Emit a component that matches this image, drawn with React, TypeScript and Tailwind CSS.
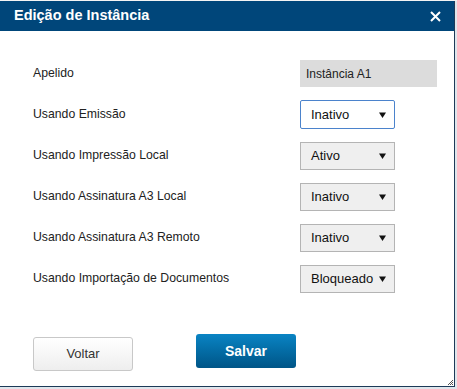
import React from "react";

const rows = [
  { label: "Usando Emissão", value: "Inativo", focused: true },
  { label: "Usando Impressão Local", value: "Ativo" },
  { label: "Usando Assinatura A3 Local", value: "Inativo" },
  { label: "Usando Assinatura A3 Remoto", value: "Inativo" },
  { label: "Usando Importação de Documentos", value: "Bloqueado" },
];

const Arrow = () => (
  <svg width="7" height="6" viewBox="0 0 7 6" className="shrink-0">
    <path d="M0 0.5 H7 L3.5 6 Z" fill="#111" />
  </svg>
);

const FakeSelect = ({ value, focused }: { value: string; focused?: boolean }) => (
  <div
    className={
      focused
        ? "w-[95px] h-[29px] flex items-center justify-between pl-[10px] pr-[8px] bg-white border border-[#4b83cc] rounded-[2px]"
        : "w-[95px] h-[28px] flex items-center justify-between pl-[10px] pr-[8px] bg-[#efefef] border border-[#b4b4b4]"
    }
  >
    <span className="text-[13px] text-[#111]">{value}</span>
    <Arrow />
  </div>
);

export default function App() {
  return (
    <div className="w-[457px] h-[389px] bg-[#dfe6ec] overflow-hidden" style={{ fontFamily: '"Liberation Sans", Arial, sans-serif' }}>
      <div className="h-[1px] bg-[#f4f4f4]" />
      <div className="w-[455px] h-[386px] bg-white border-r border-b border-[#1d3a58] flex flex-col relative">
        <div className="h-[30px] bg-[#00467a] flex items-center justify-between pl-[14px] pr-[13px]">
          <span className="text-white font-bold text-[14.5px]">Edição de Instância</span>
          <svg width="11" height="11" viewBox="0 0 11 11">
            <path d="M1 1 L10 10 M10 1 L1 10" stroke="#fff" strokeWidth="2" />
          </svg>
        </div>
        <div className="pt-[22px] pl-[33px]">
          <div className="h-[41px] flex items-center">
            <span className="w-[267px] text-[12.25px] text-[#222]">Apelido</span>
            <div className="w-[137px] h-[27px] bg-[#dcdcdc] flex items-center pl-[6px] text-[12px] text-[#222]">Instância A1</div>
          </div>
          {rows.map((r) => (
            <div key={r.label} className="h-[41px] flex items-center">
              <span className="w-[267px] text-[12.25px] text-[#222]">{r.label}</span>
              <FakeSelect value={r.value} focused={r.focused} />
            </div>
          ))}
          <div className="flex items-start gap-[63px] pt-[35px]">
            <button className="mt-[3px] w-[100px] h-[34px] rounded-[3px] border border-[#c8c8c8] bg-gradient-to-b from-white to-[#eeeeee] text-[13px] text-[#333]">
              Voltar
            </button>
            <button className="w-[100px] h-[34px] rounded-[3px] bg-gradient-to-b from-[#0a84c4] to-[#005587] text-[14px] font-bold text-white">
              Salvar
            </button>
          </div>
        </div>
        <svg width="7" height="7" viewBox="0 0 7 7" className="absolute right-[0px] bottom-[0px]">
          <path d="M6 1 L1 6 M6 3 L3 6 M6 5 L5 6" stroke="#555" strokeWidth="1" />
        </svg>
      </div>
    </div>
  );
}
